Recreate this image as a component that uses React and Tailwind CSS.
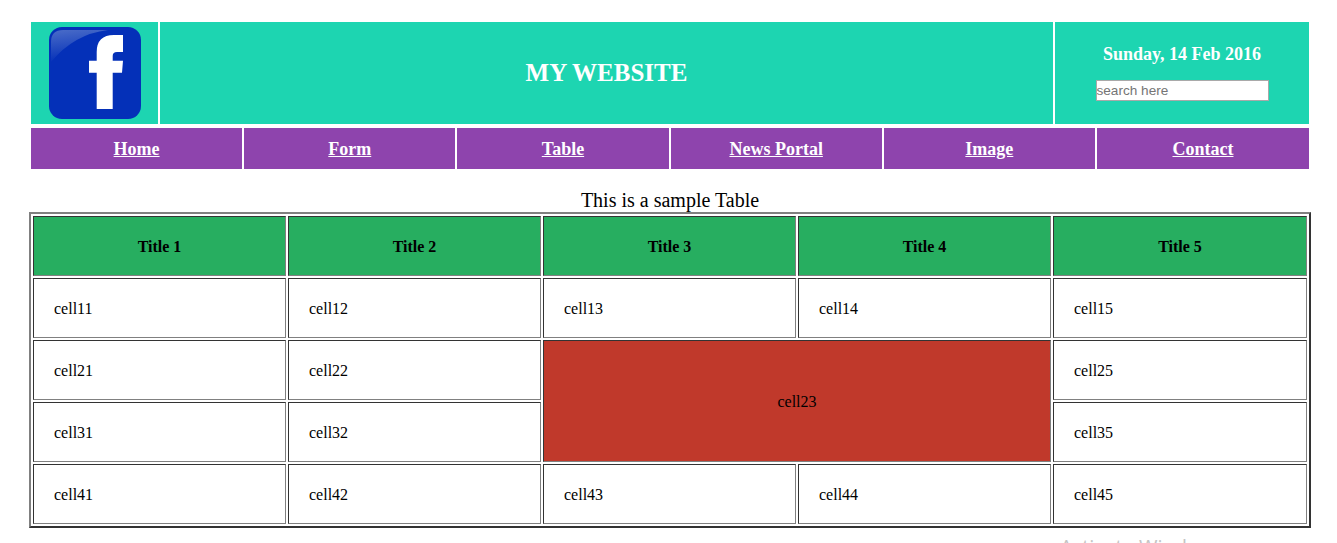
const NAV = ['Home', 'Form', 'Table', 'News Portal', 'Image', 'Contact'];
const TITLES = ['Title 1', 'Title 2', 'Title 3', 'Title 4', 'Title 5'];

const CELL = 'h-[60px] border border-t-[#333333] border-l-[#333333] border-r-[#808080] border-b-[#808080] pt-[2px] pl-5 text-left font-normal';

function Logo() {
  return (
    <svg width="94" height="94" viewBox="0 0 94 94">
      <defs>
        <linearGradient id="shine" x1="0" y1="0" x2="0.2" y2="1">
          <stop offset="0" stopColor="#4a6cc8" />
          <stop offset="1" stopColor="#0430b8" />
        </linearGradient>
      </defs>
      <rect x="1" y="1" width="92" height="92" rx="13" fill="#0430b8" />
      <path d="M3 36V16Q3 4 15 4H60Q26 8 3 36Z" fill="url(#shine)" />
      <path d="M48.7 83V46.7H41V34.7H48.7V26Q48.7 9 66 9H75V26H69Q64.7 26 64.7 30V34.7H75L74 46.7H64.7V83Z" fill="#fff" />
    </svg>
  );
}

export default function App() {
  return (
    <div className="relative h-[543px] overflow-hidden bg-white font-['Liberation_Serif',serif] text-black">
      <div className="pt-[22px] pr-[28px] pl-[31px]">
        <div className="flex h-[102px] gap-[2px] bg-white text-white">
          <div className="flex w-[127px] items-center bg-[#1dd5b1] pl-[17px]">
            <Logo />
          </div>
          <div className="flex flex-1 items-center justify-center bg-[#1dd5b1] pb-[1px] text-[25px] font-bold">MY WEBSITE</div>
          <div className="flex w-[254px] flex-col items-center bg-[#1dd5b1] pt-[22px]">
            <p className="text-lg leading-5 font-bold">Sunday, 14 Feb 2016</p>
            <input
              placeholder="search here"
              className="mt-4 h-[21px] w-[173px] border border-[#a9a9a9] bg-white font-['Liberation_Sans',sans-serif] text-[13.6px] text-black placeholder:text-[#757575]"
            />
          </div>
        </div>

        <div className="mt-[4px] grid h-[41px] grid-cols-[repeat(5,211.2px)_1fr] gap-[2px]">
          {NAV.map((item) => (
            <a key={item} href="#" className="flex items-center justify-center bg-[#8e44ad] text-lg font-bold text-white underline">
              {item}
            </a>
          ))}
        </div>
      </div>

      <table className="mt-[19px] ml-[29px] w-[1282px] table-fixed border-separate border-spacing-[2px] border-2 border-t-[#808080] border-l-[#808080] border-r-[#333333] border-b-[#333333]">
        <caption className="h-[24px] text-xl leading-6">This is a sample Table</caption>
        <colgroup>
          <col className="w-[253px]" />
          <col className="w-[253px]" />
          <col className="w-[253px]" />
          <col className="w-[253px]" />
          <col />
        </colgroup>
        <thead>
          <tr>
            {TITLES.map((title) => (
              <th key={title} className="h-[60px] border border-t-[#333333] border-l-[#333333] border-r-[#808080] border-b-[#808080] bg-[#27ae60] pt-[2px] font-bold">
                {title}
              </th>
            ))}
          </tr>
        </thead>
        <tbody>
          <tr>
            {['cell11', 'cell12', 'cell13', 'cell14', 'cell15'].map((cell) => (
              <td key={cell} className={CELL}>{cell}</td>
            ))}
          </tr>
          <tr>
            <td className={CELL}>cell21</td>
            <td className={CELL}>cell22</td>
            <td colSpan={2} rowSpan={2} className="border border-t-[#333333] border-l-[#333333] border-r-[#808080] border-b-[#808080] bg-[#c0392b] pt-[2px] text-center">
              cell23
            </td>
            <td className={CELL}>cell25</td>
          </tr>
          <tr>
            <td className={CELL}>cell31</td>
            <td className={CELL}>cell32</td>
            <td className={CELL}>cell35</td>
          </tr>
          <tr>
            {['cell41', 'cell42', 'cell43', 'cell44', 'cell45'].map((cell) => (
              <td key={cell} className={CELL}>{cell}</td>
            ))}
          </tr>
        </tbody>
      </table>

      {/* Windows activation watermark, cut off by the bottom of the window */}
      <div className="absolute top-[533px] left-[1060px] font-['Open_Sans',sans-serif] text-xl whitespace-nowrap text-[#c4c4c4]">
        Activate Windows
      </div>
    </div>
  );
}
